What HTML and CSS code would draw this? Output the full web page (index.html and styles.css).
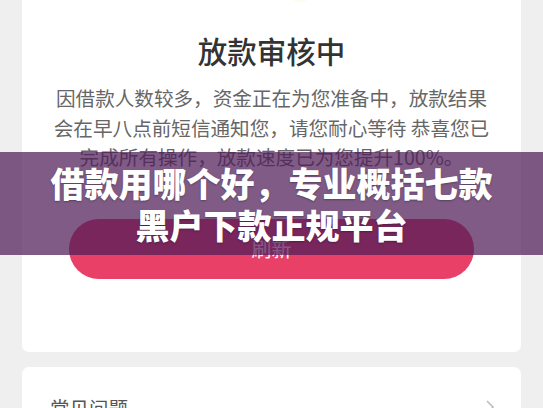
FILE: index.html
```html
<!DOCTYPE html>
<html lang="zh-CN">
<head>
    <meta charset="UTF-8">
    <title>放款审核中</title>
    <link rel="stylesheet" href="styles.css">
</head>
<body>
    <div class="page">
        <div class="card status-card">
            <div class="logo"></div>
            <h1 class="status-title">放款审核中</h1>
            <p class="status-text">因借款人数较多，资金正在为您准备中，放款结果会在早八点前短信通知您，请您耐心等待 恭喜您已完成所有操作，放款速度已为您提升100%。</p>
            <button class="refresh-btn">刷新</button>
        </div>
        <div class="card faq-card">
            <span class="faq-label">常见问题</span>
            <svg class="chevron" width="10" height="16" viewBox="0 0 10 16">
                <path d="M2 2 L8 8 L2 14" fill="none" stroke="#bdbdbd" stroke-width="1.6"/>
            </svg>
        </div>
    </div>

    <div class="banner">
        <div class="banner-text">借款用哪个好，专业概括七款<br>黑户下款正规平台</div>
    </div>
</body>
</html>
```

FILE: styles.css
```css
body {
    margin: 0;
    background: #efefef;
    font-family: "Noto Sans CJK SC", "Noto Sans", sans-serif;
    overflow: hidden;
}

.page {
    padding: 0 22px;
    display: flex;
    flex-direction: column;
    gap: 15px;
}

.card {
    background: #fff;
    border-radius: 7px;
}

.status-card {
    margin-top: -40px;
    padding: 0 29px 73px;
    display: flex;
    flex-direction: column;
    align-items: center;
}

/* 顶部图标只露出一点底边 */
.logo {
    width: 34px;
    height: 42px;
    border-radius: 0 0 17px 17px;
    background: #fefcef;
    margin-left: 56px;
}

.status-title {
    margin: 28px 0 0;
    font-size: 29.5px;
    line-height: 40px;
    font-weight: 500;
    color: #333;
}

.status-text {
    margin: 13px 0 0;
    width: 440px;
    font-size: 19.6px;
    line-height: 29.5px;
    color: #666;
    text-align: center;
}

.refresh-btn {
    margin-top: 47px;
    width: 405px;
    height: 60px;
    border: none;
    border-radius: 30px;
    background: #e94068;
    color: #fff;
    font-family: inherit;
    font-size: 20px;
}

.faq-card {
    display: flex;
    align-items: center;
    justify-content: space-between;
    padding: 26px 26px 26px 28px;
}

.faq-label {
    font-size: 19.5px;
    color: #555;
}

.banner {
    position: absolute;
    left: 0;
    right: 0;
    top: 152px;
    height: 103px;
    background: rgba(78, 28, 88, 0.72);
    display: flex;
    align-items: center;
    justify-content: center;
}

.banner-text {
    color: #fff;
    font-size: 34px;
    font-weight: 900;
    line-height: 42px;
    text-align: center;
    text-shadow: 0 1px 2px rgba(0, 0, 0, 0.3);
}
```
